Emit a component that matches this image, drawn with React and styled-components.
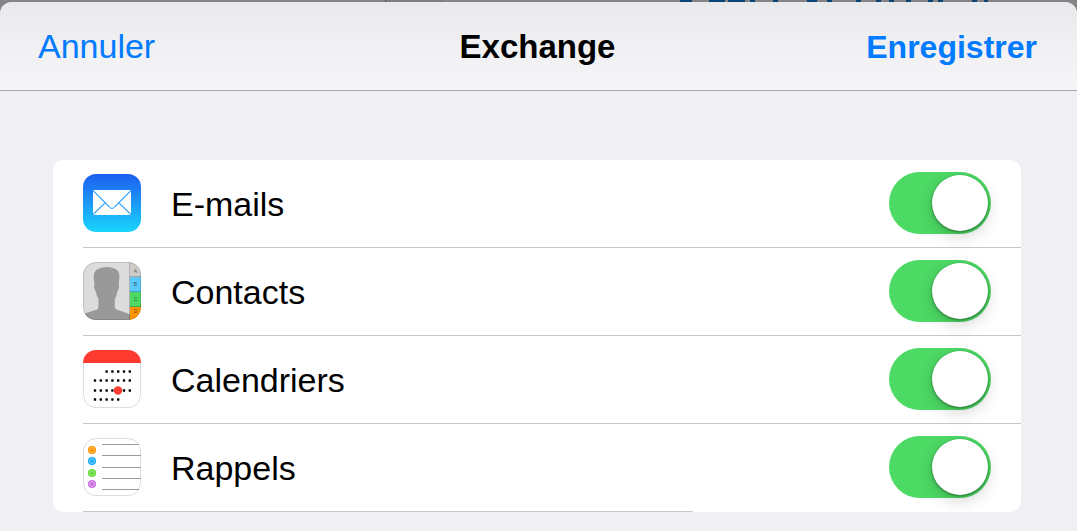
import React, { useState } from "react";
import styled, { createGlobalStyle } from "styled-components";

const GlobalStyle = createGlobalStyle`
  * {
    box-sizing: border-box;
  }

  body {
    margin: 0;
    background-color: #858587;
    font-family: "Liberation Sans", Arial, sans-serif;
    color: #000000;
  }
`;

const Page = styled.div`
  display: flex;
  flex-direction: column;
  min-height: 100vh;
`;

const Backdrop = styled.svg`
  display: block;
  width: 100%;
  height: 2px;
`;

const Sheet = styled.main`
  flex: 1;
  background-color: #efeff4;
  border-radius: 12px 12px 0 0;
  overflow: hidden;
`;

const NavBar = styled.header`
  display: grid;
  grid-template-columns: 1fr auto 1fr;
  align-items: center;
  height: 89px;
  padding: 0 40px 0 38px;
  border-bottom: 1px solid #a7a7aa;
  background: linear-gradient(to bottom, #e8e9eb, #f1f1f3 55%, #f5f5f7);
`;

const NavTitle = styled.h1`
  margin: 0;
  padding-top: 2px;
  font-size: 33px;
  line-height: 40px;
  font-weight: bold;
`;

const NavButton = styled.button`
  justify-self: ${(props) => (props.$primary ? "end" : "start")};
  padding: ${(props) => (props.$primary ? "2px 0 0" : "0")};
  border: none;
  background: none;
  color: #007aff;
  font-family: inherit;
  font-size: ${(props) => (props.$primary ? "32px" : "34px")};
  font-weight: ${(props) => (props.$primary ? "bold" : "normal")};
  line-height: 40px;
  cursor: pointer;
`;

const List = styled.ul`
  list-style: none;
  margin: 69px 56px 16px 53px;
  padding: 0 0 0 30px;
  border-radius: 10px;
  background-color: #ffffff;
`;

const Row = styled.li`
  display: flex;
  align-items: center;
  height: 88px;
  padding: 0 30px 2px 0;
  background: linear-gradient(#c8c7cc, #c8c7cc) left bottom no-repeat;
  background-size: ${(props) => (props.$last ? "65%" : "100%")} 1px;
`;

const AppIcon = styled.svg`
  flex: none;
  width: 58px;
  height: 58px;
`;

const Label = styled.label`
  flex: 1;
  padding: 2px 0 0 30px;
  font-size: 34px;
  line-height: 40px;
`;

const Switch = styled.input`
  appearance: none;
  display: flex;
  align-items: center;
  width: 102px;
  height: 62px;
  margin: 0;
  padding: 0 3px;
  border-radius: 31px;
  background-color: #e5e5ea;
  cursor: pointer;

  &::before {
    content: "";
    width: 56px;
    height: 56px;
    border-radius: 50%;
    background-color: #ffffff;
    box-shadow: 0 1px 3px rgba(0, 0, 0, 0.45), 0 6px 16px rgba(0, 0, 0, 0.16);
  }

  &:checked {
    justify-content: flex-end;
    background-color: #4cd964;
  }
`;

const MailIcon = () => (
  <AppIcon viewBox="0 0 58 58" aria-hidden="true">
    <defs>
      <linearGradient id="mailSky" x1="0" y1="0" x2="0" y2="1">
        <stop offset="0" stopColor="#1d5df0" />
        <stop offset="1" stopColor="#1ad5fd" />
      </linearGradient>
    </defs>
    <rect width="58" height="58" rx="13" fill="url(#mailSky)" />
    <rect x="10" y="16" width="38" height="25" rx="1" fill="#ffffff" />
    <path
      d="M10 16.5 L26.500 33 Q29 35.800 31.500 33 L48 16.5 M10 40.500 L22.500 28.500 M48 40.500 L35.500 28.500"
      fill="none"
      stroke="#3fa6f7"
      strokeWidth="1.1"
    />
  </AppIcon>
);

const ContactsIcon = () => (
  <AppIcon viewBox="0 0 58 58" aria-hidden="true">
    <defs>
      <clipPath id="contactsShape">
        <rect width="58" height="58" rx="13" />
      </clipPath>
    </defs>
    <g clipPath="url(#contactsShape)">
      <rect width="58" height="58" fill="#dcdcdc" />
      <path
        d="M0 58 V52.500 C4 50 11 49 14 47.500 C15.500 46.500 15.500 45 15.500 43 V37 C14 35 13.300 32 13 29.500 C11.500 28.500 10.600 24 11.500 22 C10 13 10.500 9.500 15 7 C20 4.200 28 4.200 32.500 7 C37 9.500 37 14 35.700 22 C36.600 24 35.600 28.500 34.300 29.500 C34 32 33.300 35 31.800 37 V43 C31.800 45 32 46.500 33.500 47.500 C37 49 43 50 47 52.500 V58 Z"
        fill="#999999"
      />
      <rect x="47" width="11" height="15" fill="#cfcdc9" />
      <rect x="47" y="15" width="11" height="15" fill="#5ac8fa" />
      <rect x="47" y="30" width="11" height="15" fill="#4cd964" />
      <rect x="47" y="45" width="11" height="13" fill="#ff9500" />
      <path
        d="M46.500 0 V58 M47 14.500 H58 M47 29.500 H58 M47 44.500 H58"
        stroke="#000000"
        strokeOpacity="0.2"
      />
      <g fill="#000000" fillOpacity="0.6" fontSize="5" textAnchor="middle">
        <text x="52.500" y="11">A</text>
        <text x="52.500" y="24">B</text>
        <text x="52.500" y="39">C</text>
        <text x="52.500" y="51">D</text>
      </g>
    </g>
    <rect
      x="0.5"
      y="0.5"
      width="57"
      height="57"
      rx="12.5"
      fill="none"
      stroke="#000000"
      strokeOpacity="0.12"
    />
  </AppIcon>
);

const calendarDots = [
  { y: 21.5, from: 2, to: 6 },
  { y: 30.5, from: 0, to: 6 },
  { y: 40.5, from: 0, to: 6 },
  { y: 49.5, from: 0, to: 4 },
];

const CalendarIcon = () => (
  <AppIcon viewBox="0 0 58 58" aria-hidden="true">
    <rect
      x="0.5"
      y="0.5"
      width="57"
      height="57"
      rx="12.5"
      fill="#ffffff"
      stroke="#dddddd"
    />
    <path d="M0 13 A13 13 0 0 1 13 0 H45 A13 13 0 0 1 58 13 Z" fill="#ff3b30" />
    {calendarDots.map((line) =>
      Array.from({ length: line.to - line.from + 1 }, (_, i) => (
        <rect
          key={`${line.y}-${i}`}
          x={10.8 + (line.from + i) * 5.8}
          y={line.y - 1.2}
          width="2.4"
          height="2.4"
          rx="0.4"
          fill="#000000"
        />
      ))
    )}
    <circle cx="35" cy="40.5" r="4.2" fill="#ff3b30" />
  </AppIcon>
);

const reminderLines = [
  { y: 6.5, end: 56 },
  { y: 17.5, end: 58 },
  { y: 29.5, end: 58 },
  { y: 40.5, end: 58 },
  { y: 51.5, end: 56 },
];

const reminderDots = [
  { y: 12, color: "#ff9500" },
  { y: 23, color: "#1badf8" },
  { y: 35, color: "#63da38" },
  { y: 46, color: "#cc73e1" },
];

const RemindersIcon = () => (
  <AppIcon viewBox="0 0 58 58" aria-hidden="true">
    <rect
      x="0.5"
      y="0.5"
      width="57"
      height="57"
      rx="12.5"
      fill="#ffffff"
      stroke="#dddddd"
    />
    {reminderLines.map((line) => (
      <path key={line.y} d={`M19 ${line.y} H${line.end}`} stroke="#9b9b9b" />
    ))}
    {reminderDots.map((dot) => (
      <g key={dot.y}>
        <circle cx="9" cy={dot.y} r="4.1" fill={dot.color} />
        <circle
          cx="9"
          cy={dot.y}
          r="2.5"
          fill="none"
          stroke="#ffffff"
          strokeOpacity="0.45"
          strokeWidth="0.8"
        />
      </g>
    ))}
  </AppIcon>
);

const services = [
  { id: "mail", label: "E-mails", Icon: MailIcon },
  { id: "contacts", label: "Contacts", Icon: ContactsIcon },
  { id: "calendars", label: "Calendriers", Icon: CalendarIcon },
  { id: "reminders", label: "Rappels", Icon: RemindersIcon },
];

const App = () => {
  const [enabled, setEnabled] = useState({
    mail: true,
    contacts: true,
    calendars: true,
    reminders: true,
  });

  const toggle = (id) => {
    setEnabled((prev) => ({ ...prev, [id]: !prev[id] }));
  };

  return (
    <>
      <GlobalStyle />
      <Page>
        <Backdrop aria-hidden="true">
          <rect x="385" width="1" height="2" fill="#55555a" />
          <rect x="386" width="56" height="2" fill="#7d7a82" />
          <path
            d="M680 1 h12 M709 1 h16 M728 1 h17 M750 1 h5 M773 1 h5 M807 1 h10 M827 1 h5 M856 1 h5 M876 1 h5 M889 1 h5 M906 1 h5 M928 1 h5 M938 1 h5 M972 1 h5 M984 1 h4"
            stroke="#0a4473"
            strokeWidth="2"
          />
        </Backdrop>
        <Sheet>
          <NavBar>
            <NavButton type="button">Annuler</NavButton>
            <NavTitle>Exchange</NavTitle>
            <NavButton type="button" $primary>
              Enregistrer
            </NavButton>
          </NavBar>
          <List>
            {services.map(({ id, label, Icon }, index) => (
              <Row key={id} $last={index === services.length - 1}>
                <Icon />
                <Label htmlFor={id}>{label}</Label>
                <Switch
                  id={id}
                  type="checkbox"
                  role="switch"
                  checked={enabled[id]}
                  onChange={() => toggle(id)}
                />
              </Row>
            ))}
          </List>
        </Sheet>
      </Page>
    </>
  );
};

export default App;
